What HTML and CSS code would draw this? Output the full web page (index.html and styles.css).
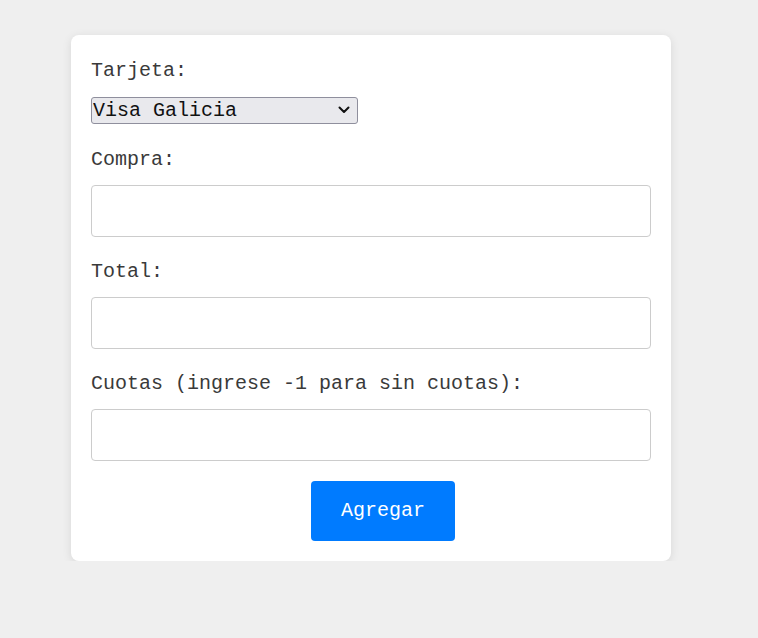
FILE: index.html
```html
<!DOCTYPE html>
<html lang="es">
<head>
<meta charset="utf-8">
<title>Agregar compra</title>
<link rel="stylesheet" href="styles.css">
</head>
<body>
<form class="card">
  <div class="group group-select">
    <label class="label" for="tarjeta">Tarjeta:</label>
    <div class="select-wrap">
      <select id="tarjeta" class="select">
        <option>Visa Galicia</option>
      </select>
      <svg class="chev" width="12" height="8" viewBox="0 0 12 8" aria-hidden="true"><path d="M1.5 1.5 L6 6 L10.5 1.5" fill="none" stroke="#111" stroke-width="2" stroke-linecap="round" stroke-linejoin="round"/></svg>
    </div>
  </div>
  <div class="group">
    <label class="label" for="compra">Compra:</label>
    <input id="compra" class="input" type="text">
  </div>
  <div class="group">
    <label class="label" for="total">Total:</label>
    <input id="total" class="input" type="text">
  </div>
  <div class="group">
    <label class="label" for="cuotas">Cuotas (ingrese -1 para sin cuotas):</label>
    <input id="cuotas" class="input" type="text">
  </div>
  <div class="actions">
    <button type="button" class="btn">Agregar</button>
  </div>
</form>
</body>
</html>
```
FILE: styles.css
```css
* { box-sizing: border-box; }
html, body { margin: 0; padding: 0; }
body {
  background: #efefef;
  font-family: "Courier New", Courier, "Nimbus Mono PS", "Nimbus Mono L", FreeMono, "Liberation Mono", monospace;
  font-size: 20px;
  line-height: 1.5;
  color: #3a3a3a;
}
.card {
  width: 600px;
  margin: 35px 0 0 71px;
  padding: 21px 20px 20px;
  background: #fff;
  border-radius: 8px;
  box-shadow: 0 2px 10px rgba(0,0,0,0.1);
}
.group {
  display: flex;
  flex-direction: column;
  align-items: flex-start;
  margin-bottom: 20px;
}
.group-select { margin-bottom: 22px; }
.label {
  display: block;
  margin-bottom: 10px;
}
.select-wrap {
  position: relative;
  width: 267px;
  height: 27px;
}
.select {
  -webkit-appearance: none;
  appearance: none;
  width: 267px;
  height: 27px;
  margin: 0;
  padding: 0 24px 0 1px;
  border: 1px solid #8f8f9d;
  border-radius: 3px;
  background: #e9e9ed;
  font-family: inherit;
  font-size: 20px;
  line-height: 25px;
  color: #111;
}
.chev {
  position: absolute;
  right: 8px;
  top: 10px;
  pointer-events: none;
}
.input {
  width: 100%;
  height: 52px;
  padding: 15px;
  border: 1px solid #ccc;
  border-radius: 4px;
  font-family: inherit;
  font-size: 20px;
  background: #fff;
}
.actions {
  display: flex;
  justify-content: center;
  padding-left: 24px;
}
.btn {
  width: 144px;
  height: 60px;
  padding: 15px 30px;
  border: 0;
  border-radius: 4px;
  background: #007bff;
  color: #fff;
  font-family: inherit;
  font-size: 20px;
  line-height: 1.5;
  cursor: pointer;
}
```
